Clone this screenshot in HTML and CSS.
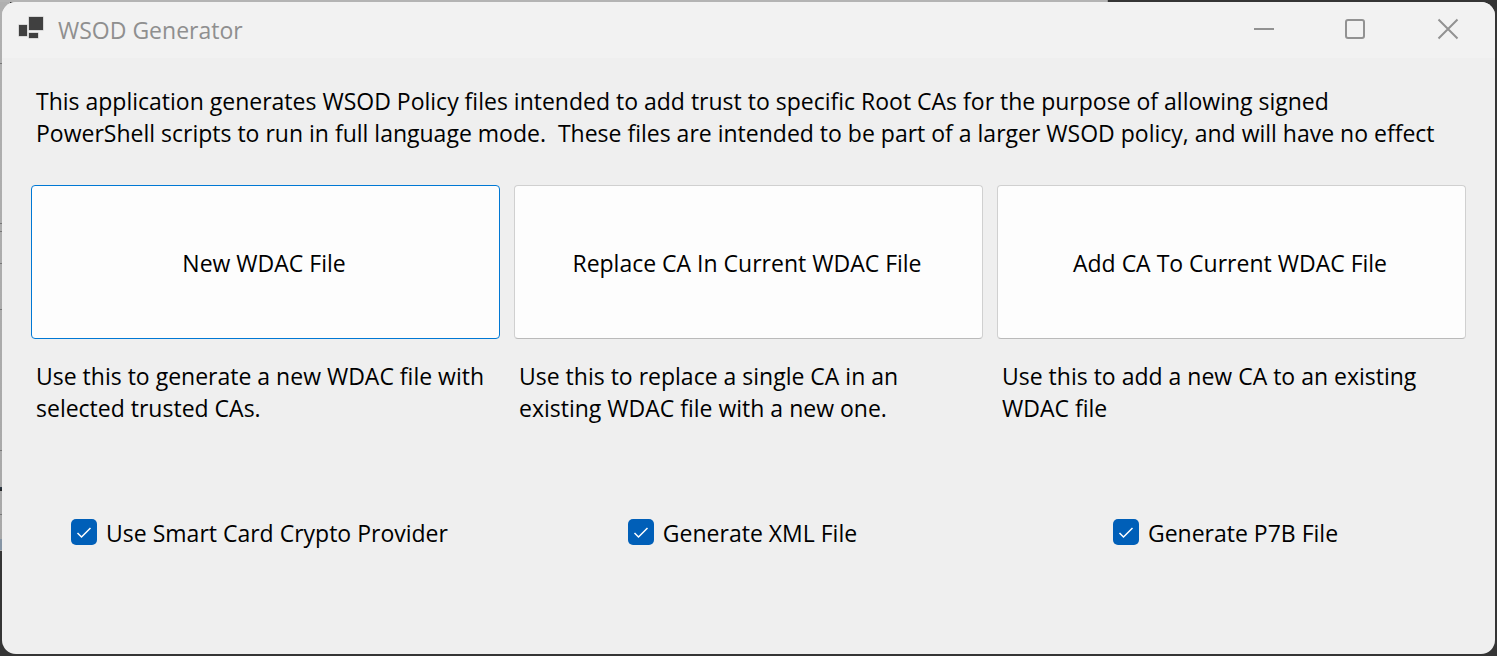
FILE: index.html
```html
<!DOCTYPE html>
<html lang="en">
<head>
<meta charset="utf-8">
<title>WSOD Generator</title>
<link rel="stylesheet" href="styles.css">
</head>
<body>
<main class="window">
  <header class="titlebar">
    <svg class="app-icon" width="26" height="24" viewBox="0 0 26 24" aria-hidden="true">
      <path fill="#bdbdbd" d="M10.500 .5h15v14h-15zM.5 8.500h9v12h-9zM10.500 16.500h10v6h-10z"/>
      <path fill="#404040" d="M11 1h14v13H11zM1 9h8v11H1zM11 17h9v5h-9z"/>
    </svg>
    <h1 class="title">WSOD Generator</h1>
    <div class="controls">
      <button class="control" type="button" aria-label="Minimize"><svg width="22" height="22" viewBox="0 0 22 22"><path d="M1 11h20"/></svg></button>
      <button class="control" type="button" aria-label="Maximize"><svg width="22" height="22" viewBox="0 0 22 22"><rect x="1" y="2" width="18" height="18" rx="2"/></svg></button>
      <button class="control" type="button" aria-label="Close"><svg width="22" height="22" viewBox="0 0 22 22"><path d="M1.500 1.500l19 19M20.500 1.500l-19 19"/></svg></button>
    </div>
  </header>
  <div class="content">
    <p class="text">This application generates WSOD Policy files intended to add trust to specific Root CAs for the purpose of allowing signed<br>PowerShell scripts to run in full language mode.&nbsp; These files are intended to be part of a larger WSOD policy, and will have no effect</p>
    <div class="columns">
      <section><button class="action primary" type="button">New WDAC File</button>
        <p class="text">Use this to generate a new WDAC file with<br>selected trusted CAs.</p></section>
      <section><button class="action" type="button">Replace CA In Current WDAC File</button>
        <p class="text">Use this to replace a single CA in an<br>existing WDAC file with a new one.</p></section>
      <section><button class="action" type="button">Add CA To Current WDAC File</button>
        <p class="text">Use this to add a new CA to an existing<br>WDAC file</p></section>
    </div>
    <div class="columns options">
      <label class="option"><span class="box"><input type="checkbox" checked><svg class="tick" viewBox="0 0 26 26" aria-hidden="true"><path d="M6.500 14l4 4 9-9"/></svg></span>Use Smart Card Crypto Provider</label>
      <label class="option"><span class="box"><input type="checkbox" checked><svg class="tick" viewBox="0 0 26 26" aria-hidden="true"><path d="M6.500 14l4 4 9-9"/></svg></span>Generate XML File</label>
      <label class="option"><span class="box"><input type="checkbox" checked><svg class="tick" viewBox="0 0 26 26" aria-hidden="true"><path d="M6.500 14l4 4 9-9"/></svg></span>Generate P7B File</label>
    </div>
  </div>
</main>
</body>
</html>
```
FILE: styles.css
```css
* { box-sizing: border-box; }
body {
  margin: 0;
  padding: 2px;
  min-height: 100vh;
  display: flex;
  font: 23px/32px "Open Sans", "Noto Sans", sans-serif;
  color: #000;
  background:
    linear-gradient(#777, #777) 0 63px / 2px 1px no-repeat,
    linear-gradient(#777, #777) 0 223px / 2px 1px no-repeat,
    linear-gradient(#777, #777) 0 231px / 2px 1px no-repeat,
    linear-gradient(#777, #777) 0 263px / 2px 1px no-repeat,
    linear-gradient(#777, #777) 0 309px / 2px 1px no-repeat,
    linear-gradient(#777, #777) 0 450px / 2px 1px no-repeat,
    linear-gradient(#2b3a48, #222) 0 487px / 2px 4px no-repeat,
    linear-gradient(#777, #777) 0 514px / 2px 1px no-repeat,
    linear-gradient(#8695a5, #8695a5) 0 539px / 2px 11px no-repeat,
    linear-gradient(#b4b4b4, #b4b4b4) 0 0 / 74% 2px no-repeat,
    linear-gradient(#b0b0b0, #a8a8a8) 0 0 / 10px 84% no-repeat,
    #353535;
}
.window {
  flex: 1;
  display: flex;
  flex-direction: column;
  background: #efefef;
  border-radius: 14px;
  overflow: hidden;
}
.titlebar {
  height: 56px;
  display: flex;
  align-items: center;
  padding: 0 1px 0 16px;
  background: #f2f2f2;
}
.app-icon { margin-bottom: 4px; }
.title {
  margin: 0 0 0 14px;
  font-size: 23px;
  font-weight: 400;
  color: #8f8f8f;
}
.controls { margin-left: auto; display: flex; }
.control {
  width: 92px;
  height: 56px;
  display: grid;
  place-items: center;
  padding: 0 0 2px;
  border: 0;
  background: none;
}
.control svg { fill: none; stroke: #929292; stroke-width: 2; }
.content { padding: 27px 29px; }
.text { margin: 0; padding-left: 5px; white-space: nowrap; }
.columns {
  display: grid;
  grid-template-columns: repeat(3, minmax(0, 1fr));
  gap: 14px;
  margin-top: 36px;
}
.action {
  display: block;
  width: 100%;
  height: 154px;
  margin-bottom: 21px;
  padding: 2px 3px 0 0;
  border: 1px solid #d0d0d0;
  border-bottom-color: #bababa;
  border-radius: 4px;
  background: #fdfdfd;
  color: #000;
  font: inherit;
}
.action.primary { border-color: #0078d4; }
.options { margin-top: 93px; }
.option {
  display: flex;
  align-items: center;
  justify-content: center;
  gap: 9px;
  padding-right: 12px;
  white-space: nowrap;
}
.box { display: grid; width: 26px; height: 26px; margin-bottom: 2px; }
.box > * { grid-area: 1 / 1; }
.box input {
  appearance: none;
  width: 26px;
  height: 26px;
  margin: 0;
  border-radius: 5px;
  background: #005fb8;
}
.tick { width: 26px; height: 26px; fill: none; stroke: #fff; stroke-width: 1.500; pointer-events: none; }
```
